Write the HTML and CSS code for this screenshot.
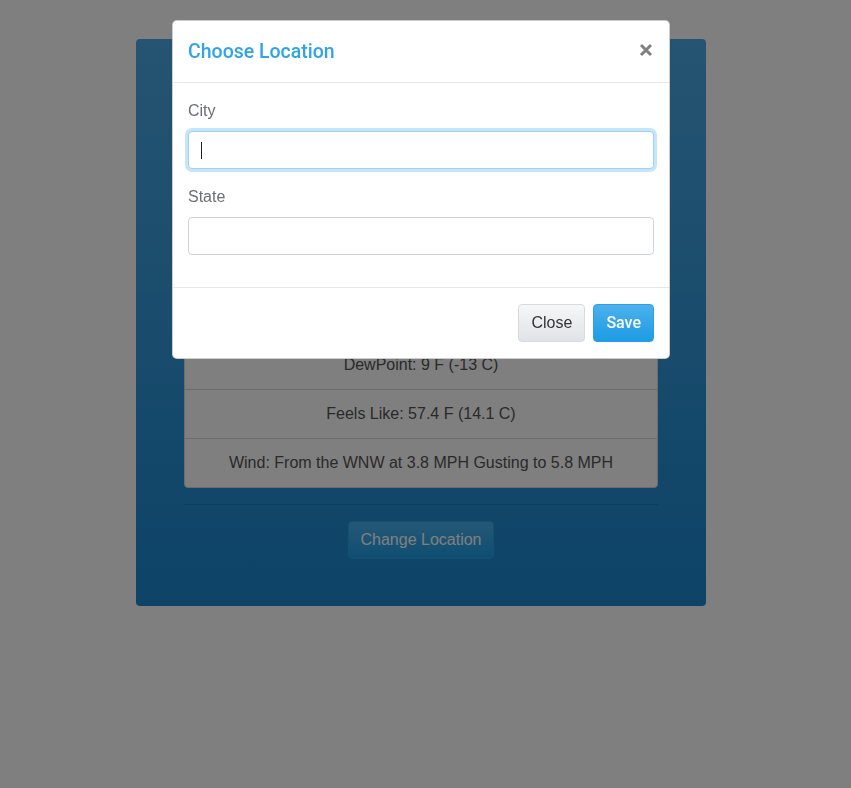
FILE: index.html
```html
<!DOCTYPE html>
<html lang="en">
<head>
<meta charset="utf-8">
<title>Weather</title>
<link rel="stylesheet" href="styles.css">
</head>
<body>
<div class="page">
  <div class="weather-card">
    <h2 class="card-title">Current Weather</h2>
    <ul class="list-group">
      <li class="list-group-item">Partly Cloudy</li>
      <li class="list-group-item">Temperature: 59 F (15 C)</li>
      <li class="list-group-item">Relative Humidity: 20%</li>
      <li class="list-group-item">Pressure: 30.02 in (1017 mb)</li>
      <li class="list-group-item">DewPoint: 9 F (-13 C)</li>
      <li class="list-group-item">Feels Like: 57.4 F (14.1 C)</li>
      <li class="list-group-item">Wind: From the WNW at 3.8 MPH Gusting to 5.8 MPH</li>
    </ul>
    <hr class="divider">
    <div class="actions">
      <button class="btn btn-primary" type="button">Change Location</button>
    </div>
  </div>
</div>

<div class="backdrop"></div>

<div class="modal">
  <div class="modal-header">
    <h5 class="modal-title">Choose Location</h5>
    <span class="close" aria-label="Close">
      <svg width="14" height="14" viewBox="0 0 14 14"><path d="M2 2 L12 12 M12 2 L2 12" stroke="#808080" stroke-width="3" stroke-linecap="butt"/></svg>
    </span>
  </div>
  <div class="modal-body">
    <div class="form-group">
      <label class="label" for="city">City</label>
      <span class="input-wrap caret">
        <input id="city" class="form-control focused" type="text">
      </span>
    </div>
    <div class="form-group">
      <label class="label" for="state">State</label>
      <span class="input-wrap">
        <input id="state" class="form-control" type="text">
      </span>
    </div>
  </div>
  <div class="modal-footer">
    <button class="btn btn-light" type="button">Close</button>
    <button class="btn btn-primary btn-save" type="button">Save</button>
  </div>
</div>
</body>
</html>
```
FILE: styles.css
```css
* { box-sizing: border-box; }

html, body {
  margin: 0;
  padding: 0;
  background: #fff;
  font-family: "Helvetica Neue", "Liberation Sans", Arial, sans-serif;
  font-size: 16px;
  line-height: 1.5;
  color: #495057;
}

.page {
  padding: 39px 0 0 136px;
}

.weather-card {
  width: 570px;
  padding: 48px 48px 47px 48px;
  border-radius: 4px;
  background: linear-gradient(#4ca9e4, #1a87cf);
}

.card-title {
  margin: 0 0 9px;
  height: 48px;
  font-size: 32px;
  line-height: 48px;
  font-weight: 400;
  color: #fff;
  text-align: center;
}

.list-group {
  list-style: none;
  margin: 0;
  padding: 0;
  display: flex;
  flex-direction: column;
}

.list-group-item {
  padding: 12px 20px;
  margin-bottom: -1px;
  background: #fff;
  border: 1px solid #d9d9d9;
  text-align: center;
  color: #555;
  font-size: 16px;
  line-height: 24px;
}
.list-group-item:first-child { border-radius: 4px 4px 0 0; }
.list-group-item:last-child { margin-bottom: 0; border-radius: 0 0 4px 4px; }

.divider {
  margin: 16px 0;
  border: 0;
  border-top: 1px solid rgba(0, 0, 0, 0.12);
}

.actions {
  display: flex;
  justify-content: center;
}

.btn {
  font-family: inherit;
  font-size: 16px;
  line-height: 24px;
  padding: 6px 12px;
  border-radius: 4px;
  border: 1px solid transparent;
  cursor: pointer;
}

.btn-primary {
  color: #fff;
  background: linear-gradient(#4cb1ec, #2fa4e7 60%, #1d9ce5);
  border-color: #2a9fe2;
}

.btn-save {
  font-family: Roboto, "Liberation Sans", sans-serif;
  font-weight: 500;
}

.btn-light {
  color: #333;
  background: linear-gradient(#f6f7f8, #dfe2e6);
  border-color: #d7dbdf;
}

.backdrop {
  position: fixed;
  inset: 0;
  background: rgba(0, 0, 0, 0.5);
}

.modal {
  position: absolute;
  top: 20px;
  left: 172px;
  width: 498px;
  background: #fff;
  border: 1px solid rgba(0, 0, 0, 0.2);
  border-radius: 5px;
}

.modal-header {
  display: flex;
  align-items: center;
  padding: 16px 15px 15px;
  border-bottom: 1px solid #e5e7ea;
}

.modal-title {
  margin: 0;
  font-family: Roboto, "Liberation Sans", sans-serif;
  font-size: 19.5px;
  line-height: 30px;
  font-weight: 500;
  color: #2fa4e7;
}

.close {
  margin-left: auto;
  margin-right: 1px;
  margin-top: -4px;
  display: flex;
}

.modal-body {
  padding: 16px 15px;
}

.form-group {
  margin-bottom: 16px;
  display: flex;
  flex-direction: column;
}

.label {
  display: block;
  margin-bottom: 8px;
  line-height: 24px;
  color: #6a6f76;
}

.input-wrap {
  position: relative;
  display: block;
}

.form-control {
  display: block;
  width: 100%;
  height: 38px;
  padding: 6px 12px;
  font-family: inherit;
  font-size: 16px;
  color: #495057;
  background: #fff;
  border: 1px solid #ced4da;
  border-radius: 4px;
  outline: none;
}

.form-control.focused {
  border-color: #9fd2f4;
  box-shadow: 0 0 0 3px rgba(47, 164, 231, 0.28);
}

.caret::after {
  content: "";
  position: absolute;
  left: 13px;
  top: 11px;
  width: 1px;
  height: 17px;
  background: #222;
}

.modal-footer {
  display: flex;
  justify-content: flex-end;
  gap: 8px;
  padding: 16px 15px;
  border-top: 1px solid #e5e7ea;
}
```
